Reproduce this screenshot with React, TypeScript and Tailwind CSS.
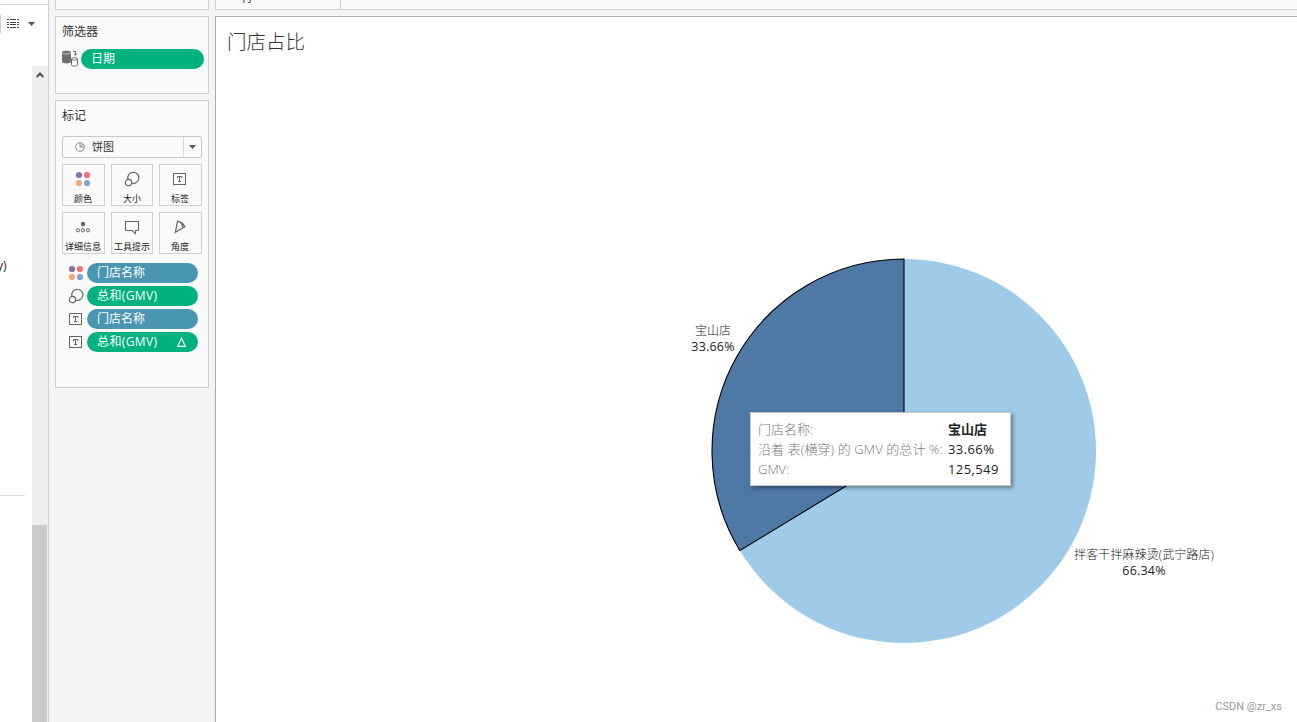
import React from 'react';

type IconProps = { className?: string };

const ColorIcon: React.FC<IconProps> = ({ className }) => (
  <svg viewBox="0 0 16 16" className={className}>
    <circle cx="4" cy="4" r="3.1" fill="#8a73a0" />
    <circle cx="12" cy="4" r="3.1" fill="#fa6f80" />
    <circle cx="4" cy="12" r="3.1" fill="#f4a878" />
    <circle cx="12" cy="12" r="3.1" fill="#82a5cf" />
  </svg>
);

const SizeIcon: React.FC<IconProps> = ({ className }) => (
  <svg viewBox="0 0 16 16" fill="none" stroke="#666" strokeWidth="1.2" className={className}>
    <path d="M3.9 8.3A5.6 5.6 0 1 1 7.6 12.2" />
    <circle cx="4.5" cy="11.6" r="3.2" />
  </svg>
);

const LabelIcon: React.FC<IconProps> = ({ className }) => (
  <svg viewBox="0 0 16 16" fill="none" stroke="#666" className={className}>
    <rect x="1.5" y="2.5" width="12" height="11" />
    <path d="M5.5 7V5.5h4.5V7M7.5 5.5v5M6 10.5h3" />
  </svg>
);

const DetailIcon: React.FC<IconProps> = ({ className }) => (
  <svg viewBox="0 0 16 16" fill="none" stroke="#666" className={className}>
    <circle cx="8" cy="5" r="2.2" fill="#666" stroke="none" />
    <circle cx="3" cy="11.3" r="1.6" />
    <circle cx="8" cy="11.3" r="1.6" />
    <circle cx="13" cy="11.3" r="1.6" />
  </svg>
);

const TooltipIcon: React.FC<IconProps> = ({ className }) => (
  <svg viewBox="0 0 16 16" fill="none" stroke="#666" strokeWidth="1.1" className={className}>
    <path d="M1.5 2.5h13v9h-3v3l-3.5-3H1.5z" />
  </svg>
);

const AngleIcon: React.FC<IconProps> = ({ className }) => (
  <svg viewBox="0 0 16 16" fill="none" stroke="#666" strokeWidth="1.2" className={className}>
    <path d="M5.5 2.2L3.4 13.3L12.8 7.8C11.5 5 9 3 5.5 2.2zM9 4L11.3 8.7" />
  </svg>
);

const Caret: React.FC<IconProps> = ({ className }) => (
  <svg viewBox="0 0 7 4" className={className}>
    <path d="M0 0h7L3.5 4z" fill="#555" />
  </svg>
);

const MARK_BUTTONS = [
  { label: '颜色', Icon: ColorIcon, pad: 'pr-px' },
  { label: '大小', Icon: SizeIcon, pad: '' },
  { label: '标签', Icon: LabelIcon, pad: 'pr-px' },
  { label: '详细信息', Icon: DetailIcon, pad: 'pr-px' },
  { label: '工具提示', Icon: TooltipIcon, pad: '' },
  { label: '角度', Icon: AngleIcon, pad: 'pr-px' },
];

const MARK_PILLS = [
  { label: '门店名称', Icon: ColorIcon, color: 'bg-[#4996b2]', delta: false },
  { label: '总和(GMV)', Icon: SizeIcon, color: 'bg-[#00b180]', delta: false },
  { label: '门店名称', Icon: LabelIcon, color: 'bg-[#4996b2]', delta: false },
  { label: '总和(GMV)', Icon: LabelIcon, color: 'bg-[#00b180]', delta: true },
];

const DataPane = () => (
  <aside className="w-[49px] shrink-0 flex flex-col bg-white border-r border-[#d0d0d0]">
    <div className="h-[5px] border-b border-[#dcdcdc]" />
    <div className="h-[61px] flex items-start pt-[10px]">
      <div className="w-px h-[18px] bg-[#cfcfcf]" />
      <svg viewBox="0 0 12 9" className="w-3 h-[9px] ml-[6px] mt-1" shapeRendering="crispEdges">
        <path d="M0 .5h12M0 3.5h12M0 5.5h12M0 8.5h12" stroke="#444" strokeDasharray="2.4 .8" />
      </svg>
      <Caret className="w-[7px] h-1 ml-[9px] mt-[7px]" />
    </div>
    <div className="flex-1 flex">
      <div className="w-8 flex flex-col overflow-hidden">
        <div className="h-[429px] pt-[192px] text-xs leading-4 text-[#222]">
          <div className="-ml-[3px]">y)</div>
        </div>
        <div className="w-[25px] h-px bg-[#dcdcdc]" />
      </div>
      <div className="w-4 flex flex-col bg-[#eeeeee]">
        <div className="h-[459px] pt-[6px]">
          <svg viewBox="0 0 8 6" className="w-2 h-[6px] ml-1">
            <path d="M.7 5L4 1.5L7.3 5" fill="none" stroke="#505050" strokeWidth="2" />
          </svg>
        </div>
        <div className="w-[15px] flex-1 bg-[#cbcbcb]" />
      </div>
    </div>
  </aside>
);

const FilterCard = () => (
  <section className="h-[78px] border border-[#d0d0d0] bg-[#fafafa] px-[6px] pt-[7px]">
    <h2 className="text-xs leading-4 text-[#333]">筛选器</h2>
    <div className="flex mt-[9px] -mr-[2px]">
      <svg viewBox="0 0 17 17" className="w-[17px] h-[17px] mt-px mr-[2px]">
        <path d="M0 2.2C0 .3 9 .3 9 2.2V12c0 1.9-9 1.9-9 0z" fill="#707070" />
        <path d="M0 2.7c0 1.7 9 1.7 9 0" fill="none" stroke="#ddd" strokeWidth=".8" />
        <path d="M11 1.5h2.5v3M12 3.5l1.5 1.8L15 3.5" fill="none" stroke="#666" />
        <path d="M9.5 9c0-1.8 6-1.8 6 0v5.8c0 1.8-6 1.8-6 0zM9.5 9c0 1.3 6 1.3 6 0" fill="#fafafa" stroke="#666" />
      </svg>
      <div className="w-[123px] h-5 rounded-full bg-[#00b180] pl-[10px] text-xs leading-5 text-white">日期</div>
    </div>
  </section>
);

const MarksCard = () => (
  <section className="h-[288px] mt-[6px] border border-[#d0d0d0] bg-[#fafafa] px-[6px] pt-[7px]">
    <h2 className="text-xs leading-4 text-[#333]">标记</h2>
    <div className="h-[22px] mt-3 flex items-center border border-[#c8c8c8] rounded-xs">
      <svg viewBox="0 0 10 10" className="w-[10px] h-[10px] ml-3" fill="none" stroke="#8a8a8a">
        <circle cx="5" cy="5" r="4.3" />
        <path d="M5 1v4h4M5 5L8 2" />
      </svg>
      <span className="flex-1 ml-[7px] text-[11px] leading-5 text-[#333]">饼图</span>
      <span className="w-[18px] h-full flex items-center justify-center border-l border-[#d8d8d8]">
        <Caret className="w-[7px] h-1" />
      </span>
    </div>
    <div className="grid grid-cols-[43px_42px_43px] gap-x-[6px] gap-y-[6px] mt-[6px]">
      {MARK_BUTTONS.map(({ label, Icon, pad }) => (
        <div key={label} className={`h-[42px] flex flex-col items-center border border-[#d0d0d0] pt-[6px] ${pad}`}>
          <Icon className="w-4 h-4 shrink-0" />
          <span className="mt-[6px] text-[9px] leading-3 text-[#222] whitespace-nowrap">{label}</span>
        </div>
      ))}
    </div>
    <div className="flex flex-col gap-[3px] mt-[9px] pl-[6px]">
      {MARK_PILLS.map(({ label, Icon, color, delta }, idx) => (
        <div key={idx} className="flex items-center">
          <Icon className="w-4 h-4 mr-[3px]" />
          <div className={`w-[111px] h-5 flex items-center justify-between rounded-full pl-[10px] pr-3 text-xs leading-5 text-white ${color}`}>
            {label.includes('GMV') ? <span className="tracking-[0.4px]">{label}</span> : label}
            {delta && (
              <svg viewBox="0 0 9 10" className="w-[9px] h-[10px]">
                <path d="M4.5 1L8.3 9.3H.7z" fill="none" stroke="#fff" strokeWidth="1.2" />
              </svg>
            )}
          </div>
        </div>
      ))}
    </div>
  </section>
);

const PieTooltip = () => (
  <div className="absolute left-[534px] top-[395px] w-[261px] h-[74px] border border-[#c8c8c8] bg-white shadow-[2px_2px_4px_rgba(0,0,0,0.4)] pl-[7px] pt-[6px]">
    <div className="grid grid-cols-[190px_1fr] text-[13px] leading-5 whitespace-nowrap">
      <span className="text-[#777] font-light">门店名称:</span>
      <span className="text-[#222] font-bold">宝山店</span>
      <span className="text-[#777] font-light tracking-[0.1px]">沿着 表(横穿) 的 GMV 的总计 %:</span>
      <span className="text-[#222] font-medium tracking-[0.4px]">33.66%</span>
      <span className="text-[#777] font-light">GMV:</span>
      <span className="text-[#222] font-medium tracking-[0.4px]">125,549</span>
    </div>
  </div>
);

const Worksheet = () => (
  <main className="flex-1 relative overflow-hidden border-l border-t border-[#adadad] bg-white">
    <h1 className="pl-[11px] pt-[11px] text-[19.5px] leading-7 font-light text-[#333]">门店占比</h1>
    <svg viewBox="0 0 388 388" className="absolute left-[494px] top-[240px] w-[388px] h-[388px]">
      <circle cx="194" cy="194" r="192" fill="#a0cbe8" />
      <path d="M194 194V2A192 192 0 0 0 29.8 293.5Z" fill="#4e79a7" stroke="#000" strokeWidth="1.1" />
    </svg>
    <div className="absolute left-[457px] top-[306px] w-20 text-center text-xs leading-4 text-[#222]">
      <div className="font-light">宝山店</div>
      <div className="text-[12.5px] tracking-[0.2px]">33.66%</div>
    </div>
    <div className="absolute left-[848px] top-[530px] w-40 text-center text-xs leading-4 text-[#222]">
      <div className="font-light tracking-[0.1px]">拌客干拌麻辣烫(武宁路店)</div>
      <div className="text-[12.5px] tracking-[0.2px]">66.34%</div>
    </div>
    <PieTooltip />
    <div className="absolute right-[15px] bottom-[7px] font-['Roboto'] text-[11px] leading-4 text-[#999]">CSDN @zr_xs</div>
  </main>
);

export default function App() {
  return (
    <div className="w-full h-screen flex overflow-hidden bg-[#f4f4f4] font-['Open_Sans','Noto_Sans_CJK_SC',sans-serif]">
      <DataPane />
      <div className="w-[166px] shrink-0 pl-[6px] pr-[6px]">
        <div className="h-[10px] mb-[6px] border border-t-0 border-[#d0d0d0] bg-[#fafafa]" />
        <FilterCard />
        <MarksCard />
      </div>
      <div className="flex-1 flex flex-col">
        <div className="h-[10px] mb-[6px] shrink-0 flex items-end overflow-hidden border-l border-b border-[#d0d0d0] bg-[#fafafa]">
          <div className="w-[125px] h-[19px] pl-[25px] border-r border-[#d0d0d0] text-xs leading-4 text-[#333]">行</div>
        </div>
        <Worksheet />
      </div>
    </div>
  );
}
